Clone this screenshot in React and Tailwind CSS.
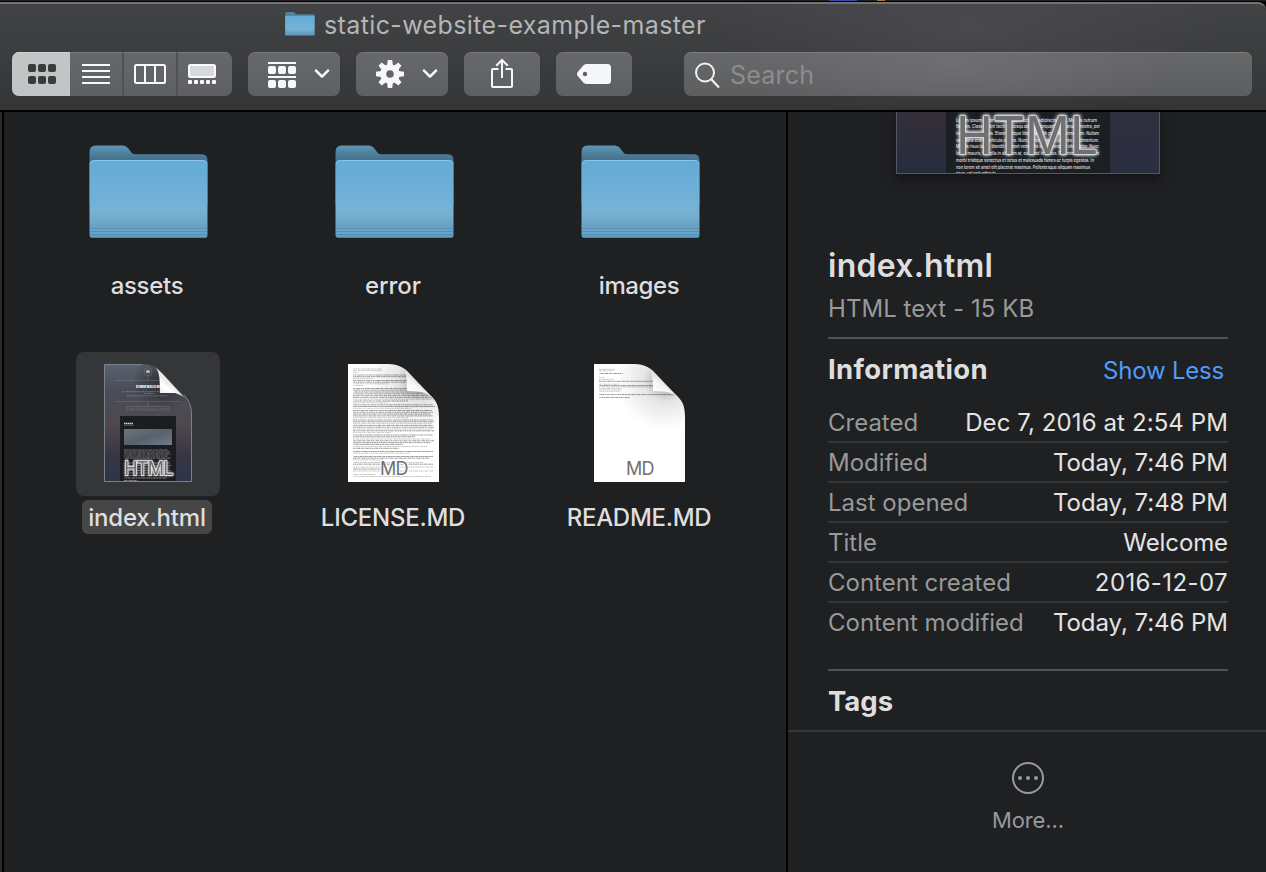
import React from "react";

const uiFont = "font-['Inter','Noto_Sans',sans-serif]";

function FolderIcon({ className, id }) {
  return (
    <svg className={className} viewBox="0 0 120 95" preserveAspectRatio="none">
      <defs>
        <linearGradient id={`${id}-front`} x1="0" y1="0" x2="0" y2="1">
          <stop offset="0" stopColor="#63abd8" />
          <stop offset="0.65" stopColor="#77b2d5" />
          <stop offset="0.78" stopColor="#72a9ca" />
          <stop offset="0.88" stopColor="#679fc2" />
          <stop offset="1" stopColor="#5d9dc6" />
        </linearGradient>
        <linearGradient id={`${id}-back`} x1="0" y1="0" x2="0" y2="1">
          <stop offset="0" stopColor="#5c96b7" />
          <stop offset="0.22" stopColor="#47738e" />
          <stop offset="1" stopColor="#47738e" />
        </linearGradient>
      </defs>
      <path d="M0.500 7 Q0.500 0.500 6.500 0.500 H34 Q37 0.500 39 3 L42 7 Q43.500 9.300 46 9.300 H113 Q118.500 9.300 118.500 15.500 V60 H0.500 Z" fill={`url(#${id}-back)`} />
      <path d="M0.500 20 Q0.500 15 5.500 15 H114 Q118.500 15 118.500 20 V90 Q118.500 93 115.500 93 H4 Q0.500 93 0.500 90 Z" fill={`url(#${id}-front)`} />
      <path d="M1 19 Q1.500 15.500 5.500 15.500 H114 Q117.500 15.500 118 19" fill="none" stroke="#8bc4e6" strokeWidth="1" />
      <path d="M1 83.500 H118 M1 86.500 H118 M1 89.500 H118" stroke="#4f88ad" strokeWidth="1" opacity="0.6" />
      <path d="M1 85 H118 M1 88 H118" stroke="#79b1d2" strokeWidth="1" opacity="0.6" />
      <path d="M2 92.500 H117" stroke="#4683a8" strokeWidth="1" />
    </svg>
  );
}

const DASHES = ["2.3 .5 1.2 .4 3.1 .6 1.7 .5", "1.5 .5 2.8 .6 .9 .4 2.1 .5", "3.3 .6 1.1 .4 1.9 .6 .8 .5", "1 .5 1.7 .5 2.6 .5 1.3 .6"];
const LICENSE_ROWS = [
  [5, 29, 0], [6.700, 29, 0], [8.500, 5, 0],
  [11, 55, 1], [12.700, 55, 1], [14.500, 20, 0], [16.500, 55, 1], [18.200, 53, 1], [19.800, 35, 0],
  [21.500, 10, 0], [24.500, 78, 1], [26.200, 80, 1], [28, 79, 1], [29.800, 82, 1], [31.600, 78, 1], [33.400, 82, 1], [35.200, 80, 0], [37, 55, 1], [38.800, 34, 0],
  [40.800, 80, 1], [42.500, 82, 1], [44.300, 58, 0], [46.500, 79, 1], [48.300, 80, 1], [50.100, 78, 1], [51.900, 80, 1], [53.700, 55, 0],
  [56, 80, 1], [57.800, 81, 1], [59.600, 79, 0], [61.400, 80, 1], [63.200, 81, 1], [65, 80, 0], [66.800, 81, 1], [68.600, 38, 0],
  [71, 80, 1], [72.800, 62, 1], [75, 78, 0], [76.800, 81, 1], [78.600, 78, 1], [80.400, 50, 1], [82.500, 74, 0], [84.300, 46, 1],
  [87.500, 80, 1], [89.200, 57, 0], [92.500, 80, 1], [94.200, 76, 1], [96, 31, 0], [98.500, 70, 0], [100.200, 80, 1], [103, 80, 0],
  [105, 28, 1], [107, 80, 0], [110.500, 22, 0], [112.500, 78, 0],
];
const README_ROWS = [
  [5.300, 16, 0], [6.800, 15, 0], [9.500, 24, 1], [13.300, 6, 0], [15.300, 15, 0], [17.300, 55, 1], [20.200, 20, 0], [21.500, 55, 1], [22.800, 60, 0],
  [24.300, 22, 0], [25.800, 23, 0], [27.300, 21, 0], [30.600, 76, 1], [33.500, 31, 1],
];
const SITE_ROWS = [[88, 44], [90, 46], [92, 47], [94, 44], [96, 47], [98, 4], [101, 46], [103.500, 47], [106, 46], [108.500, 47], [111, 47], [113.500, 47], [116, 43], [118.500, 14]];

function PageIcon({ id, rows }) {
  return (
    <svg className="h-[122px] w-[96px] overflow-visible" viewBox="0 0 96 122">
      <defs>
        <linearGradient id={`${id}-curl`} x1="0.1" y1="1" x2="0.65" y2="0.35">
          <stop offset="0" stopColor="#ffffff" />
          <stop offset="0.6" stopColor="#f4f4f4" />
          <stop offset="1" stopColor="#d2d2d2" />
        </linearGradient>
        <radialGradient id={`${id}-shade`} gradientUnits="userSpaceOnUse" cx="74" cy="18" r="50">
          <stop offset="0" stopColor="#000" stopOpacity="0.38" />
          <stop offset="0.45" stopColor="#000" stopOpacity="0.1" />
          <stop offset="1" stopColor="#000" stopOpacity="0" />
        </radialGradient>
        <clipPath id={`${id}-clip`}>
          <path d="M2 2 H42 C53 2 59 6 65 13 L83 32 C90 38 93 43 93 55 V120 H2 Z" />
        </clipPath>
      </defs>
      <g clipPath={`url(#${id}-clip)`}>
        <path d="M2 2 H94 V120 H2 Z" fill="#fff" />
        {rows.map(([y, w, dense], i) => (
          <path key={i} d={`M7 ${y + 2} h${w}`} stroke={dense ? "#8c8c8c" : "#a0a0a0"} strokeWidth={dense ? 0.900 : 0.600} strokeDasharray={DASHES[i % 4]} strokeDashoffset={(i * 1.7) % 6} />
        ))}
        <path d="M2 2 H94 V120 H2 Z" fill={`url(#${id}-shade)`} />
      </g>
      <path d="M55 5 C60 9 61 14 61 29 C69 28 78 29 87 36 C79 29 66 13 55 5 Z" fill={`url(#${id}-curl)`} />
      <path d="M61 12 V29 L80 30 Z" fill={`url(#${id}-curl)`} />
      <text x="48" y="113" textAnchor="middle" className="font-['Inter',sans-serif]" fontSize="18" letterSpacing="-0.7" fill="#707070" stroke="#fff" strokeWidth="2" paintOrder="stroke">MD</text>
    </svg>
  );
}

function HtmlPageIcon() {
  return (
    <svg className="h-[122px] w-[96px] overflow-visible" viewBox="0 0 96 122">
      <defs>
        <linearGradient id="site-bg" x1="0" y1="0" x2="0" y2="1">
          <stop offset="0" stopColor="#5a6371" />
          <stop offset="0.22" stopColor="#4a4d57" />
          <stop offset="0.52" stopColor="#50474e" />
          <stop offset="0.78" stopColor="#363642" />
          <stop offset="1" stopColor="#2e3549" />
        </linearGradient>
        <linearGradient id="site-curl" x1="0.1" y1="1" x2="0.65" y2="0.35">
          <stop offset="0" stopColor="#f0f0f0" />
          <stop offset="0.4" stopColor="#ffffff" />
          <stop offset="1" stopColor="#dcdcdc" />
        </linearGradient>
        <radialGradient id="site-shade" gradientUnits="userSpaceOnUse" cx="62" cy="20" r="30">
          <stop offset="0" stopColor="#111" stopOpacity="0.55" />
          <stop offset="1" stopColor="#111" stopOpacity="0" />
        </radialGradient>
        <linearGradient id="site-photo" x1="0" y1="0" x2="1" y2="1">
          <stop offset="0" stopColor="#6a747f" />
          <stop offset="0.5" stopColor="#58626e" />
          <stop offset="1" stopColor="#707987" />
        </linearGradient>
        <clipPath id="site-clip">
          <path d="M4 2 H42 C53 2 58 6 63 12 L82 31 C89 37 92 43 92 55 V120 H4 Z" />
        </clipPath>
      </defs>
      <g clipPath="url(#site-clip)">
        <path d="M4 2 H92 V120 H4 Z" fill="url(#site-bg)" />
        <path d="M4 2 H92 V120 H4 Z" fill="url(#site-shade)" />
        <g fill="none" stroke="#858891" strokeWidth="0.6" opacity="0.6">
          <circle cx="48" cy="9.700" r="4" />
          <path d="M15 18.500 H70 M48 14 V18.500 M15 39.500 H81 M48 39.500 V44 M26.500 44.500 H69.500 V48 H26.500 Z M37 44.500 V48 M47.500 44.500 V48 M58 44.500 V48" />
          <path d="M28.500 46.300 H34 M40 46.300 H44 M50 46.300 H55 M60 46.300 H67" />
        </g>
        <path d="M46 9 L48 7.700 L50 9 L49.500 11 H46.500 Z" fill="#b8bac0" />
        <text x="36" y="26" fontSize="3.700" fontWeight="800" textLength="23.500" fill="#fff" className="font-['Inter',sans-serif]">DIMENSION</text>
        <path d="M22 29.700 H71 M44 31.500 H54 M27 33.800 H68" stroke="#a4a5ab" strokeWidth="0.6" opacity="0.8" strokeDasharray="2 .7 1.2 .5 2.6 .6" />
        <path d="M20 54 H76 V120 H20 Z" fill="#1c1d21" />
        <path d="M24 61.500 H33" stroke="#d4d4d6" strokeWidth="1.500" strokeDasharray="1.5 .4" />
        <path d="M24 63.500 H34" stroke="#777" strokeWidth="0.5" />
        <path d="M24 67 H72 V83 H24 Z" fill="url(#site-photo)" />
        {SITE_ROWS.map(([y, w], i) => (
          <path key={y} d={`M24 ${y} h${w}`} stroke="#98989a" strokeWidth="0.8" strokeDasharray={DASHES[i % 4]} strokeDashoffset={(i * 2.3) % 7} />
        ))}
      </g>
      <path d="M42 2.500 H4.500 V119.500 H91.500 V52 C91.500 44 89 39 84 33" fill="none" stroke="#78818e" strokeWidth="1" />
      <path d="M55 5 C59 9 60 14 60 31 C68 29 76 30 84 35 C77 28 65 13 55 5 Z" fill="url(#site-curl)" />
      <path d="M60 12 V31 L79 31 Z" fill="url(#site-curl)" />
      <text x="48.500" y="113" textAnchor="middle" fontSize="18" letterSpacing="-0.7" fill="#6e6e6e" stroke="#e8e8e8" strokeWidth="1.400" paintOrder="stroke" className="font-['Inter',sans-serif] [filter:drop-shadow(0_0_1px_rgba(255,255,255,0.9))]">HTML</text>
    </svg>
  );
}

const PREVIEW_LINES = [
  "Lorem ipsum dolor sit amet, consectetur adipiscing elit. Mauris rutrum",
  "facilisis. Class aptent taciti sociosqu ad litora torquent per conubia nostra, per",
  "inceptos himenaeos. Etiam tristique libero eu nibh porttitor fermentum. Nullam",
  "venenatis erat id vehicula viverra. Nunc ultrices eros ut ultricies condimentum.",
  "Mauris risus lacus, blandit sit amet venenatis non, bibendum vitae dolor. Nunc",
  "lorem mauris, fringilla in aliquam at, euismod in lectus. Pellentesque habitant",
  "morbi tristique senectus et netus et malesuada fames ac turpis egestas. In",
  "non lorem sit amet elit placerat maximus. Pellentesque aliquam maximus",
  "risus, vel sed vehicula.",
];
const PREVIEW_WIDTHS = [141, 144, 143, 143, 143, 143, 138, 134, 41];

function Preview() {
  return (
    <svg className="h-[62px] w-[264px] shadow-[0_5px_12px_rgba(0,0,0,0.4)]" viewBox="0 0 264 62">
      <defs>
        <linearGradient id="pv-bg" x1="0" y1="0" x2="0" y2="1">
          <stop offset="0" stopColor="#342f38" />
          <stop offset="1" stopColor="#262c3e" />
        </linearGradient>
        <linearGradient id="pv-bg-right" x1="0" y1="0" x2="0" y2="1">
          <stop offset="0" stopColor="#302f3e" />
          <stop offset="1" stopColor="#292e41" />
        </linearGradient>
      </defs>
      <path d="M0 0 H264 V62 H0 Z" fill="url(#pv-bg)" />
      <path d="M215 0 H264 V62 H215 Z" fill="url(#pv-bg-right)" />
      <path d="M50 0 H214 V62 H50 Z" fill="#1b1f24" />
      {PREVIEW_LINES.map((line, i) => (
        <text key={line} x="60" y={9.600 + i * 6.700} fontSize="4.400" textLength={PREVIEW_WIDTHS[i]} lengthAdjust="spacingAndGlyphs" fill="#e4e4e4" fontWeight="500" className="font-['Inter',sans-serif]">{line}</text>
      ))}
      <text x="60" y="42" fontSize="52" textLength="142" lengthAdjust="spacingAndGlyphs" fill="#707070" stroke="#d8d8d8" strokeWidth="1.400" paintOrder="stroke" className="font-['Inter',sans-serif] [filter:drop-shadow(0_0_1.5px_rgba(255,255,255,0.9))_drop-shadow(0_0_2px_rgba(255,255,255,0.7))]">HTML</text>
      <path d="M0.500 0 V61.500 H263.500 V0" fill="none" stroke="#515867" />
    </svg>
  );
}

function Chevron() {
  return (
    <svg className="h-[10px] w-[16px]" viewBox="0 0 16 10" fill="none" stroke="#f6f7fa" strokeWidth="2.600" strokeLinecap="round" strokeLinejoin="round">
      <path d="M2 1.700 L8 7.700 L14 1.700" />
    </svg>
  );
}

function GridIcon() {
  return (
    <svg className="h-[20px] w-[28px]" viewBox="0 0 28 20" fill="#3a3b3d">
      {[0, 10, 20].map((x) => [0, 12].map((y) => <rect key={`${x}-${y}`} x={x} y={y} width="8" height="8" rx="2" />))}
    </svg>
  );
}

function ListIcon() {
  return (
    <svg className="h-[20px] w-[28px]" viewBox="0 0 28 20" stroke="#f8f9fb" strokeWidth="2">
      <path d="M0 1 H28 M0 7 H28 M0 13 H28 M0 19 H28" />
    </svg>
  );
}

function ColumnsIcon() {
  return (
    <svg className="h-[20px] w-[32px]" viewBox="0 0 32 20" fill="none" stroke="#f8f9fb" strokeWidth="2">
      <rect x="1" y="1" width="30" height="18" rx="1.500" />
      <path d="M11 1 V19 M21 1 V19" />
    </svg>
  );
}

function GalleryIcon() {
  return (
    <svg className="h-[20px] w-[28px]" viewBox="0 0 28 20">
      <rect x="1" y="1" width="26" height="12" rx="1.500" fill="#d8d9da" stroke="#f8f9fb" strokeWidth="2" />
      {[0, 6, 12, 18, 24].map((x) => <rect key={x} x={x} y="16" width="4" height="4" rx="1" fill="#f8f9fb" />)}
    </svg>
  );
}

function GroupIcon() {
  return (
    <svg className="mt-[2px] h-[26px] w-[28px]" viewBox="0 0 28 26" fill="#f6f7fa">
      <path d="M0 0 H28 V2 H0 Z M0 14 H28 V16 H0 Z" />
      {[0, 10, 20].map((x) => [4, 18].map((y) => <rect key={`${x}-${y}`} x={x} y={y} width="8" height="8" rx="2" />))}
    </svg>
  );
}

function GearIcon() {
  return (
    <svg className="h-[28px] w-[28px]" viewBox="-14 -14 28 28">
      {[0, 45, 90, 135, 180, 225, 270, 315].map((a) => (
        <path key={a} d="M-3.200 -7 L-2.200 -14 H2.200 L3.200 -7 Z" fill="#f6f7fa" transform={`rotate(${a})`} />
      ))}
      <circle r="6.800" fill="none" stroke="#f6f7fa" strokeWidth="6" />
    </svg>
  );
}

function ShareIcon() {
  return (
    <svg className="mb-px h-[31px] w-[24px]" viewBox="0 0 24 31" fill="none" stroke="#f6f7fa" strokeWidth="2">
      <path d="M8.500 11 H3 Q2 11 2 12 V28 Q2 29 3 29 H21 Q22 29 22 28 V12 Q22 11 21 11 H15.500" />
      <path d="M12 20 V2 M6.200 7.800 L12 2 L17.800 7.800" />
    </svg>
  );
}

function TagIcon() {
  return (
    <svg className="h-[20px] w-[34px]" viewBox="0 0 34 20">
      <path fillRule="evenodd" fill="#f6f7fa" d="M10 0 H30.500 Q34 0 34 3.500 V16.500 Q34 20 30.500 20 H10 Q8 20 6.500 18.700 L0.700 12 Q-0.700 10 0.700 8 L6.500 1.300 Q8 0 10 0 Z M8 7.800 A2.200 2.200 0 1 0 8 12.200 A2.200 2.200 0 1 0 8 7.800 Z" />
    </svg>
  );
}

function ToolButton({ className, children }) {
  return (
    <button className={`flex h-[44px] items-center rounded-[7px] border-t border-[#77787a] bg-linear-to-b from-[#67686a] to-[#5e5f61] pb-px ${className}`}>
      {children}
    </button>
  );
}

function Item({ label, selected, page, tracking, children }) {
  return (
    <div className="flex h-[232px] w-[246px] flex-col items-center">
      <div className={`flex h-[144px] w-[144px] items-center justify-center rounded-[8px] ${page ? "pb-[2px]" : "pl-px"} ${selected ? "bg-[#353638]" : ""}`}>{children}</div>
      <div className={`mt-1 mr-[2px] flex h-[34px] items-center rounded-[6px] px-[6px] pt-[2px] text-[24px] leading-[32px] font-medium whitespace-nowrap text-[#dededf] ${tracking} ${selected ? "bg-[#464646]" : ""}`}>{label}</div>
    </div>
  );
}

const INFO = [
  ["Created", "Dec 7, 2016 at 2:54 PM", "tracking-[0.1px]"],
  ["Modified", "Today, 7:46 PM", "tracking-[-0.05px]"],
  ["Last opened", "Today, 7:48 PM", "tracking-[-0.05px]"],
  ["Title", "Welcome", "tracking-[-0.1px]"],
  ["Content created", "2016-12-07", "tracking-[0.4px]"],
  ["Content modified", "Today, 7:46 PM", "tracking-[-0.05px]"],
];

export default function App() {
  return (
    <div className={`flex h-[872px] w-[1266px] flex-col overflow-hidden bg-black ${uiFont}`}>
      <div className="flex h-[2px] shrink-0 border-b border-black bg-[#202023]">
        <div className="ml-[829px] h-px w-[28px] bg-[#3c4aa8]" />
        <div className="ml-[20px] h-px w-[8px] bg-[#b07a2c]" />
      </div>
      <header className="flex h-[108px] shrink-0 flex-col rounded-tr-[8px] border-t-2 border-[#727374] bg-[radial-gradient(ellipse_260px_90px_at_970px_25px,rgba(80,80,88,0.55),transparent),linear-gradient(to_bottom,#424344,#343536)]">
        <div className="flex h-[42px] shrink-0 items-center pl-[285px]">
          <FolderIcon className="mb-[2px] h-[24px] w-[30px]" id="title-folder" />
          <h1 className="ml-[9px] text-[25px] leading-[36px] tracking-[0.38px] text-[#b4b5b6]">static-website-example-master</h1>
        </div>
        <div className="mt-[6px] flex h-[44px] pl-[12px]">
          <div className="flex h-[44px] w-[220px] overflow-hidden rounded-[7px] bg-linear-to-b from-[#67686a] to-[#5e5f61]">
            <button className="flex w-[58px] items-center justify-center border-t border-[#d0d1d2] bg-[#c3c4c5] pb-px pl-[2px]"><GridIcon /></button>
            <button className="flex w-[54px] items-center justify-center border-t border-r-2 border-t-[#77787a] border-r-[#505153] pb-px"><ListIcon /></button>
            <button className="flex w-[54px] items-center justify-center border-t border-r-2 border-t-[#77787a] border-r-[#505153] pb-px"><ColumnsIcon /></button>
            <button className="flex w-[54px] items-center border-t border-[#77787a] pb-px pl-[10px]"><GalleryIcon /></button>
          </div>
          <ToolButton className="ml-[16px] w-[92px] pl-[20px]"><GroupIcon /><span className="ml-[18px]"><Chevron /></span></ToolButton>
          <ToolButton className="ml-[16px] w-[92px] pl-[20px]"><GearIcon /><span className="ml-[18px]"><Chevron /></span></ToolButton>
          <ToolButton className="ml-[16px] w-[76px] justify-center"><ShareIcon /></ToolButton>
          <ToolButton className="ml-[16px] w-[76px] justify-center"><TagIcon /></ToolButton>
          <div className="ml-[52px] flex h-[44px] w-[568px] items-center rounded-[7px] border-t border-[#7c7d7e] bg-[radial-gradient(ellipse_220px_60px_at_270px_10px,rgba(120,120,128,0.5),transparent),linear-gradient(to_bottom,#666768,#5d5e5f)] pl-[10px]">
            <svg className="h-[28px] w-[28px]" viewBox="0 0 28 28" fill="none" stroke="#f0f1f2" strokeWidth="2">
              <circle cx="11" cy="11.500" r="9" />
              <path d="M17.200 18.200 L25 26.500" strokeWidth="2.200" />
            </svg>
            <span className="mt-[2px] ml-[8px] text-[25px] tracking-[0.2px] text-[#8c8d8e]">Search</span>
          </div>
        </div>
      </header>
      <div className="mt-[2px] flex h-[760px] bg-[#1f2022]">
        <div className="w-[4px] border-r-2 border-black bg-[#29292b]" />
        <main className="flex w-[782px] flex-wrap content-start bg-[#1f2022] pt-[8px] pl-[21px]">
          <Item label="assets" tracking="tracking-[-0.3px]"><FolderIcon className="h-[95px] w-[120px]" id="f-assets" /></Item>
          <Item label="error" tracking="tracking-[-0.1px]"><FolderIcon className="h-[95px] w-[120px]" id="f-error" /></Item>
          <Item label="images" tracking="tracking-[-0.4px]"><FolderIcon className="h-[95px] w-[120px]" id="f-images" /></Item>
          <Item label="index.html" selected page tracking="tracking-[-0.2px]"><HtmlPageIcon /></Item>
          <Item label="LICENSE.MD" page tracking="tracking-[-0.25px]"><PageIcon id="p-license" rows={LICENSE_ROWS} /></Item>
          <Item label="README.MD" page tracking="tracking-[-0.3px]"><PageIcon id="p-readme" rows={README_ROWS} /></Item>
        </main>
        <aside className="flex w-[480px] flex-col border-l-2 border-black bg-[#1f2022]">
          <div className="flex h-[618px] flex-col pr-[38px] pl-[40px]">
            <div className="flex h-[134px] shrink-0 justify-center"><Preview /></div>
            <h2 className="h-[40px] text-[32px] leading-[40px] font-semibold tracking-[0.25px] text-[#dededf]">index.html</h2>
            <p className="mt-[6px] h-[34px] text-[24px] leading-[34px] tracking-[0.05px] text-[#98999a]">HTML text - 15 KB</p>
            <div className="mt-[11px] h-[2px] shrink-0 bg-[#525354]" />
            <div className="flex h-[64px] shrink-0 items-center justify-between pr-[4px] pb-px">
              <h3 className="mb-[2px] text-[27.5px] font-bold tracking-[0.35px] text-[#dededf]">Information</h3>
              <a className="text-[24px] tracking-[-0.2px] text-[#4f9cf7]">Show Less</a>
            </div>
            <dl className="flex flex-col">
              {INFO.map(([name, value, tracking], i) => (
                <div key={name} className={`flex h-[40px] items-center justify-between pt-[2px] text-[24px] whitespace-nowrap ${i < 5 ? "border-b-2 border-[#343537]" : "pb-[2px]"}`}>
                  <dt className="text-[#98999a]">{name}</dt>
                  <dd className={`text-[#e4e4e5] ${tracking}`}>{value}</dd>
                </div>
              ))}
            </dl>
            <div className="mt-[26px] h-[2px] shrink-0 bg-[#525354]" />
            <h3 className="mt-[11px] text-[27.5px] leading-[38px] font-bold text-[#dededf]">Tags</h3>
          </div>
          <div className="flex flex-1 flex-col items-center border-t-2 border-[#353638] pt-[30px] pl-[2px]">
            <svg className="h-[32px] w-[32px]" viewBox="0 0 32 32" fill="none" stroke="#9a9b9d" strokeWidth="2">
              <circle cx="16" cy="16" r="15" />
              <g fill="#9a9b9d" stroke="none"><circle cx="8" cy="16" r="2" /><circle cx="16" cy="16" r="2" /><circle cx="24" cy="16" r="2" /></g>
            </svg>
            <span className="mt-[9px] text-[22px] leading-[34px] tracking-[-0.1px] text-[#98999b]">More...</span>
          </div>
        </aside>
      </div>
    </div>
  );
}
